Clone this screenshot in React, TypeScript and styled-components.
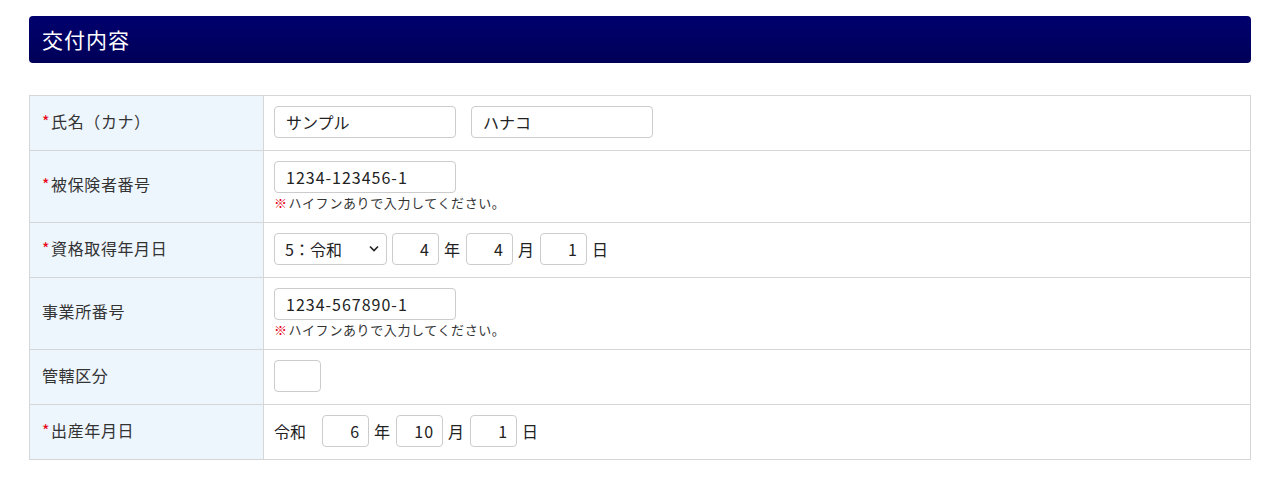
import styled, { createGlobalStyle } from 'styled-components';

const GlobalStyle = createGlobalStyle`
  body {
    margin: 0;
    background: #fff;
    font-family: 'Noto Sans CJK JP', 'Noto Sans', sans-serif;
    color: #333;
  }
`;

const Page = styled.div`
  padding: 16px 29px;
`;

const SectionTitle = styled.h2`
  margin: 0;
  height: 47px;
  display: flex;
  align-items: center;
  padding: 0 13px 2px;
  box-sizing: border-box;
  border-radius: 4px;
  background: linear-gradient(#00006e, #000058);
  color: #fff;
  font-size: 21px;
  font-weight: 400;
  letter-spacing: 1px;
`;

const Table = styled.table`
  width: 100%;
  margin-top: 32px;
  border-collapse: collapse;
  border: 1px solid #d6d6d6;
`;

const Label = styled.th`
  width: 221px;
  padding: 0 0 5px 12px;
  background: #edf5fd;
  border: 1px solid #d6d6d6;
  text-align: left;
  font-size: 16px;
  font-weight: 400;
  letter-spacing: 0.6px;
  color: #333;
`;

const Required = styled.span`
  color: #e60012;
  margin-right: 1px;
`;

const Cell = styled.td<{ $tall?: boolean }>`
  height: ${(p) => (p.$tall ? 72 : 55)}px;
  padding: 0 10px 2px;
  border: 1px solid #d6d6d6;
  box-sizing: border-box;
`;

const Line = styled.div`
  display: flex;
  align-items: center;
  gap: 5px;
  font-size: 16px;
  color: #222;
`;

const Input = styled.input<{ $w: number; $num?: boolean; $code?: boolean }>`
  box-sizing: border-box;
  width: ${(p) => p.$w}px;
  height: 32px;
  padding: ${(p) => (p.$num ? '0 8px 0 4px' : '0 11px')};
  border: 1px solid #ccc;
  border-radius: 4px;
  font-family: 'Noto Sans CJK JP', 'Noto Sans', sans-serif;
  font-size: 16px;
  letter-spacing: ${(p) => (p.$code || p.$num ? '1px' : '0')};
  color: #222;
  text-align: ${(p) => (p.$num ? 'right' : 'left')};
  background: #fff;
`;

const SelectBox = styled.div`
  position: relative;
  width: 113px;
  height: 32px;
`;

const Select = styled.select`
  appearance: none;
  box-sizing: border-box;
  width: 100%;
  height: 100%;
  padding: 0 10px;
  border: 1px solid #ccc;
  border-radius: 4px;
  font-family: 'Noto Sans CJK JP', 'Noto Sans', sans-serif;
  font-size: 16px;
  color: #222;
  background: #fff;
`;

const Caret = styled.svg`
  position: absolute;
  right: 8px;
  top: 12px;
  pointer-events: none;
`;

const Unit = styled.span`
  width: 17px;
`;

const Era = styled.span`
  margin-right: 11px;
`;

const Note = styled.div`
  margin-top: 1px;
  font-size: 13px;
  line-height: 17px;
  letter-spacing: 0.6px;
  color: #333;
`;

const Mark = styled.span`
  color: #e60012;
  font-weight: 700;
  margin-right: 1px;
`;

const Hint = () => (
  <Note>
    <Mark>※</Mark>ハイフンありで入力してください。
  </Note>
);

const Date = ({ y, m, d }: { y: string; m: string; d: string }) => (
  <>
    <Input $w={47} $num defaultValue={y} />
    <Unit>年</Unit>
    <Input $w={47} $num defaultValue={m} />
    <Unit>月</Unit>
    <Input $w={47} $num defaultValue={d} />
    <Unit>日</Unit>
  </>
);

export default function App() {
  return (
    <Page>
      <GlobalStyle />
      <SectionTitle>交付内容</SectionTitle>
      <Table>
        <tbody>
          <tr>
            <Label>
              <Required>*</Required>氏名（カナ）
            </Label>
            <Cell>
              <Line style={{ gap: 15 }}>
                <Input $w={182} defaultValue="サンプル" />
                <Input $w={182} defaultValue="ハナコ" />
              </Line>
            </Cell>
          </tr>
          <tr>
            <Label>
              <Required>*</Required>被保険者番号
            </Label>
            <Cell $tall>
              <Line>
                <Input $w={182} $code defaultValue="1234-123456-1" />
              </Line>
              <Hint />
            </Cell>
          </tr>
          <tr>
            <Label>
              <Required>*</Required>資格取得年月日
            </Label>
            <Cell>
              <Line>
                <SelectBox>
                  <Select defaultValue="5">
                    <option value="4">4：平成</option>
                    <option value="5">5：令和</option>
                  </Select>
                  <Caret width="10" height="7" viewBox="0 0 10 7">
                    <path d="M1 1.5 L5 5.5 L9 1.5" fill="none" stroke="#222" strokeWidth="1.6" />
                  </Caret>
                </SelectBox>
                <Date y="4" m="4" d="1" />
              </Line>
            </Cell>
          </tr>
          <tr>
            <Label>事業所番号</Label>
            <Cell $tall>
              <Line>
                <Input $w={182} $code defaultValue="1234-567890-1" />
              </Line>
              <Hint />
            </Cell>
          </tr>
          <tr>
            <Label>管轄区分</Label>
            <Cell>
              <Line>
                <Input $w={47} />
              </Line>
            </Cell>
          </tr>
          <tr>
            <Label>
              <Required>*</Required>出産年月日
            </Label>
            <Cell>
              <Line>
                <Era>令和</Era>
                <Date y="6" m="10" d="1" />
              </Line>
            </Cell>
          </tr>
        </tbody>
      </Table>
    </Page>
  );
}
